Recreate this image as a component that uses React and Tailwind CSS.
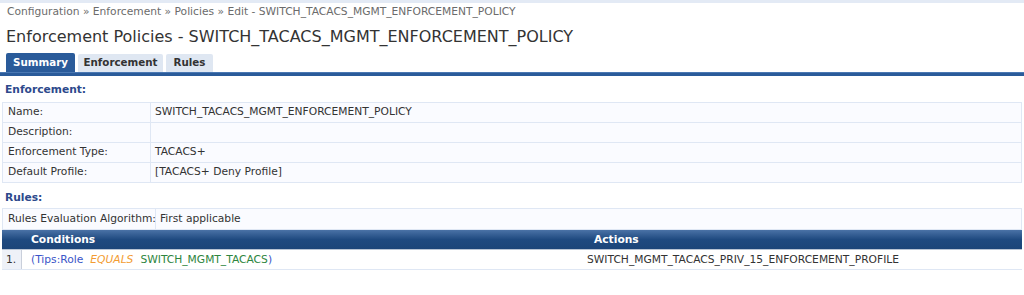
import React from "react";

const font = { fontFamily: '"DejaVu Sans", Verdana, sans-serif' };

function InfoRow({ label, value, labelWidth = "w-[148px]", height = "h-[19px]" }) {
  return (
    <div className="flex border-b border-[#dfe7f4] last:border-b-0">
      <div className={`${labelWidth} ${height} shrink-0 border-r border-[#dfe7f4] px-[5px] flex items-center whitespace-nowrap`}>
        {label}
      </div>
      <div className={`${height} flex-1 px-[4px] flex items-center whitespace-nowrap`}>{value}</div>
    </div>
  );
}

export default function App() {
  return (
    <div className="w-[1024px] h-[295px] bg-white text-[10.7px] text-[#333]" style={font}>
      <div className="h-[3px] bg-[#e3eaf5]" />

      {/* Breadcrumb */}
      <div className="px-[7px] pt-[1px] h-[20px] text-[#6b6b6b] leading-[16px]">
        Configuration » Enforcement » Policies » Edit - SWITCH_TACACS_MGMT_ENFORCEMENT_POLICY
      </div>

      {/* Title */}
      <h1 className="px-[6px] text-[16px] leading-[28px] text-[#333] h-[30px]">
        Enforcement Policies - SWITCH_TACACS_MGMT_ENFORCEMENT_POLICY
      </h1>

      {/* Tabs */}
      <div className="flex gap-[3px] px-[6px] h-[19px] items-end text-[10.3px]">
        <div className="h-[19px] flex items-center bg-[#2a5b9a] text-white font-bold rounded-t-[2px] w-[69px] justify-center">
          Summary
        </div>
        <div className="h-[18px] flex items-center bg-[#dfe7f2] text-[#333] font-bold rounded-t-[2px] w-[85px] justify-center">
          Enforcement
        </div>
        <div className="h-[18px] flex items-center bg-[#dfe7f2] text-[#333] font-bold rounded-t-[2px] w-[47px] justify-center">
          Rules
        </div>
      </div>
      <div className="h-[4px] bg-[#2a5b9a] border-t border-[#4a78b3]" />

      {/* Enforcement section */}
      <div className="px-[5px] pt-[6px] h-[26px] font-bold text-[#2d4a8c]">Enforcement:</div>
      <div className="mx-[2px] border border-[#dfe7f4] bg-[#fafbff]">
        <InfoRow label="Name:" value="SWITCH_TACACS_MGMT_ENFORCEMENT_POLICY" />
        <InfoRow label="Description:" value="" />
        <InfoRow label="Enforcement Type:" value="TACACS+" />
        <InfoRow label="Default Profile:" value="[TACACS+ Deny Profile]" />
      </div>

      {/* Rules section */}
      <div className="px-[5px] pt-[7px] h-[25px] font-bold text-[#2d4a8c]">Rules:</div>
      <div className="mx-[2px] border border-[#dfe7f4] bg-[#fafbff]">
        <InfoRow
          label="Rules Evaluation Algorithm:"
          value="First applicable"
          labelWidth="w-[153px]"
          height="h-[20px]"
        />
      </div>

      {/* Rules table */}
      <div className="mx-[2px]">
        <div className="flex h-[20px] pt-[2px] items-center text-white font-bold bg-gradient-to-b from-[#4a72a6] via-[#1f4a80] to-[#1c4579] border-b border-[#b8c4d4]">
          <div className="w-[589px] pl-[29px]">Conditions</div>
          <div className="flex-1 pl-[3px]">Actions</div>
        </div>
        <div className="flex h-[20px] items-stretch border-b border-[#dfe7f4]">
          <div className="w-[20px] flex items-center pt-[2px] pl-[4px] bg-[#eef1f8] border-r border-[#c9cfdb]">1.</div>
          <div className="w-[565px] pl-[9px] pt-[2px] flex items-center gap-[7px]">
            <span className="text-[#3a55c8]">(Tips:Role</span>
            <span className="italic text-[#f39c32]">EQUALS</span>
            <span>
              <span className="text-[#2e8540]">SWITCH_MGMT_TACACS</span>
              <span className="text-[#3a55c8]">)</span>
            </span>
          </div>
          <div className="flex-1 pt-[2px] flex items-center">SWITCH_MGMT_TACACS_PRIV_15_ENFORCEMENT_PROFILE</div>
        </div>
      </div>
    </div>
  );
}
